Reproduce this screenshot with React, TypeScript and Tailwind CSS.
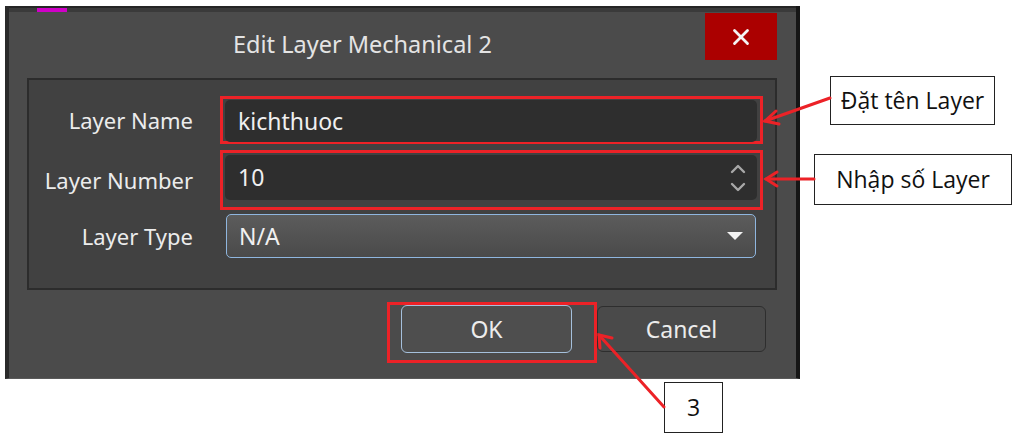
import { X } from "lucide-react";

const uiFont = { fontFamily: '"Noto Sans", "Open Sans", sans-serif' };
const noteFont = { fontFamily: '"Open Sans", "Noto Sans", sans-serif' };

const Callout = ({ text, className }: { text: string; className: string }) => (
  <div
    className={`absolute flex items-center justify-center bg-white border-[1.5px] border-[#222] text-[23px] text-[#111] ${className}`}
    style={noteFont}
  >
    {text}
  </div>
);

const App = () => {
  return (
    <div className="relative min-h-screen w-[1024px] h-[436px] bg-white overflow-hidden">
      <div className="pt-[6px] pl-[5px]">
        {/* dialog */}
        <div
          className="w-[795px] h-[373px] bg-[#4b4b4b] border-l-[4px] border-l-[#2a2a2a] border-r-[4px] border-r-[#161616] border-b border-b-[#5a5a5a] flex flex-col"
          style={uiFont}
        >
          <div className="h-[6px] bg-[#3a3a3a] border-t-2 border-t-[#262626] relative">
            <div className="absolute left-[28px] top-0 w-[30px] h-[4px] bg-[#d000c8]" />
          </div>

          <div className="flex h-[60px]">
            <div className="flex-1 flex items-center pl-[224px] pt-[6px] text-[23.5px] text-[#e4e4e4]">
              Edit Layer Mechanical 2
            </div>
            <div className="mt-[1px] mr-[19px] w-[72px] h-[47px] bg-[#ab0000] flex items-center justify-center">
              <X className="w-[26px] h-[26px] text-[#f4f4f4]" strokeWidth={2.6} />
            </div>
          </div>

          {/* fields panel */}
          <div className="mt-[6px] ml-[18px] w-[750px] h-[212px] bg-[#414141] border-2 border-[#2c2c2c] pt-[16px] pr-[12px] flex flex-col">
            <div className="flex items-center">
              <div className="w-[164px] text-right text-[22px] text-[#ececec]">Layer Name</div>
              <div className="ml-[27px] w-[543px] h-[48px] border-[3px] border-[#ec2227] pt-[1px] pl-[2px] pr-[3px]">
                <div className="h-[42px] rounded-[5px] bg-[#2e2e2e] flex items-center pl-[13px] text-[23px] text-[#f0f0f0]">
                  kichthuoc
                </div>
              </div>
            </div>

            <div className="mt-[6px] flex items-center">
              <div className="w-[164px] text-right text-[22px] text-[#ececec]">Layer Number</div>
              <div className="ml-[27px] w-[543px] h-[60px] border-[3px] border-[#ec2227] pt-[2px] pl-[2px] pr-[3px]">
                <div className="h-[45px] rounded-[5px] bg-[#2e2e2e] flex items-center pl-[13px] pr-[11px] text-[23px] text-[#f0f0f0]">
                  <span className="flex-1">10</span>
                  <svg width="16" height="32" viewBox="0 0 16 32" fill="none" stroke="#a8a8a8" strokeWidth="2.4" strokeLinecap="round" strokeLinejoin="round">
                    <path d="M2 10 L8 4 L14 10" />
                    <path d="M2 22 L8 28 L14 22" />
                  </svg>
                </div>
              </div>
            </div>

            <div className="mt-[4px] flex items-center">
              <div className="w-[164px] text-right text-[22px] text-[#ececec]">Layer Type</div>
              <div className="ml-[33px] w-[530px] h-[44px] rounded-[5px] border-[1.5px] border-[#8fb6df] bg-gradient-to-b from-[#5c5c5c] to-[#4a4a4a] flex items-center pl-[12px] pr-[12px] text-[23px] text-[#f0f0f0]">
                <span className="flex-1">N/A</span>
                <svg width="16" height="8" viewBox="0 0 16 8">
                  <path d="M0 0 L16 0 L8 8 Z" fill="#f2f2f2" />
                </svg>
              </div>
            </div>
          </div>

          {/* buttons */}
          <div className="mt-[12px] ml-[378px] flex items-start">
            <div className="w-[210px] h-[61px] border-[3px] border-[#ec2227] pl-[11px] pr-[22px]">
              <div className="h-[48px] rounded-[6px] border-[1.5px] border-[#a5c0dc] bg-[#4e4e4e] flex items-center justify-center text-[23px] text-[#ececec]">
                OK
              </div>
            </div>
            <div className="mt-[4px] w-[169px] h-[46px] rounded-[6px] border-[1.5px] border-[#2e2e2e] bg-[#4a4a4a] flex items-center justify-center text-[23px] text-[#ececec]">
              Cancel
            </div>
          </div>
        </div>
      </div>

      {/* annotations */}
      <Callout text="Đặt tên Layer" className="left-[830px] top-[76px] w-[165px] h-[49px]" />
      <Callout text="Nhập số Layer" className="left-[814px] top-[154px] w-[198px] h-[51px]" />
      <Callout text="3" className="left-[664px] top-[382px] w-[59px] h-[51px]" />

      <svg className="absolute inset-0 pointer-events-none" width="1024" height="436">
        <g stroke="#ec2227" strokeWidth="3" fill="none" strokeLinecap="round">
          <path d="M830 98 L765 121" />
          <path d="M776 111 L765 121 L779 124" />
          <path d="M814 179 L766 179" />
          <path d="M777 172 L766 179 L777 186" />
          <path d="M664 407 L599 335" />
          <path d="M600 348 L599 335 L612 338" />
        </g>
      </svg>
    </div>
  );
};

export default App;
